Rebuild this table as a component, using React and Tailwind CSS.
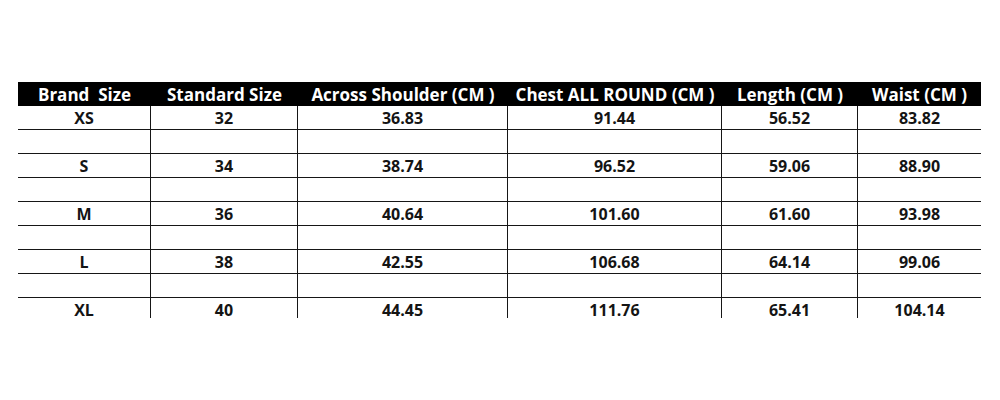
import React from 'react';

const HEAD = ['Brand  Size', 'Standard Size', 'Across Shoulder (CM )', 'Chest ALL ROUND (CM )', 'Length (CM )', 'Waist (CM )'];

const ROWS = [
  ['XS', '32', '36.83', '91.44', '56.52', '83.82'],
  null,
  ['S', '34', '38.74', '96.52', '59.06', '88.90'],
  null,
  ['M', '36', '40.64', '101.60', '61.60', '93.98'],
  null,
  ['L', '38', '42.55', '106.68', '64.14', '99.06'],
  null,
  ['XL', '40', '44.45', '111.76', '65.41', '104.14'],
];

const COLS = 'grid grid-cols-[133px_147px_210px_214px_136px_123px]';

export default function App() {
  return (
    <div className="w-[1000px] h-[400px] bg-white pt-[82px] pl-[18px]" style={{ fontFamily: '"Open Sans", Lato, sans-serif' }}>
      <div className="w-[963px] h-[236px] overflow-hidden">
        {/* header */}
        <div className={`${COLS} h-[24px] bg-black text-white font-bold text-[17px]`}>
          {HEAD.map((h, i) => (
            <div key={i} className="flex items-center justify-center whitespace-pre leading-none">{h}</div>
          ))}
        </div>

        {ROWS.map((r, ri) => (
          <div key={ri} className={`${COLS} h-[24px] text-[#141414] font-bold text-[16px]`}>
            {(r || ['', '', '', '', '', '']).map((c, ci) => (
              <div
                key={ci}
                className={`flex items-center justify-center border-b border-[#161616] leading-none ${ci < 5 ? 'border-r' : ''}`}
              >
                {c}
              </div>
            ))}
          </div>
        ))}
      </div>
    </div>
  );
}
